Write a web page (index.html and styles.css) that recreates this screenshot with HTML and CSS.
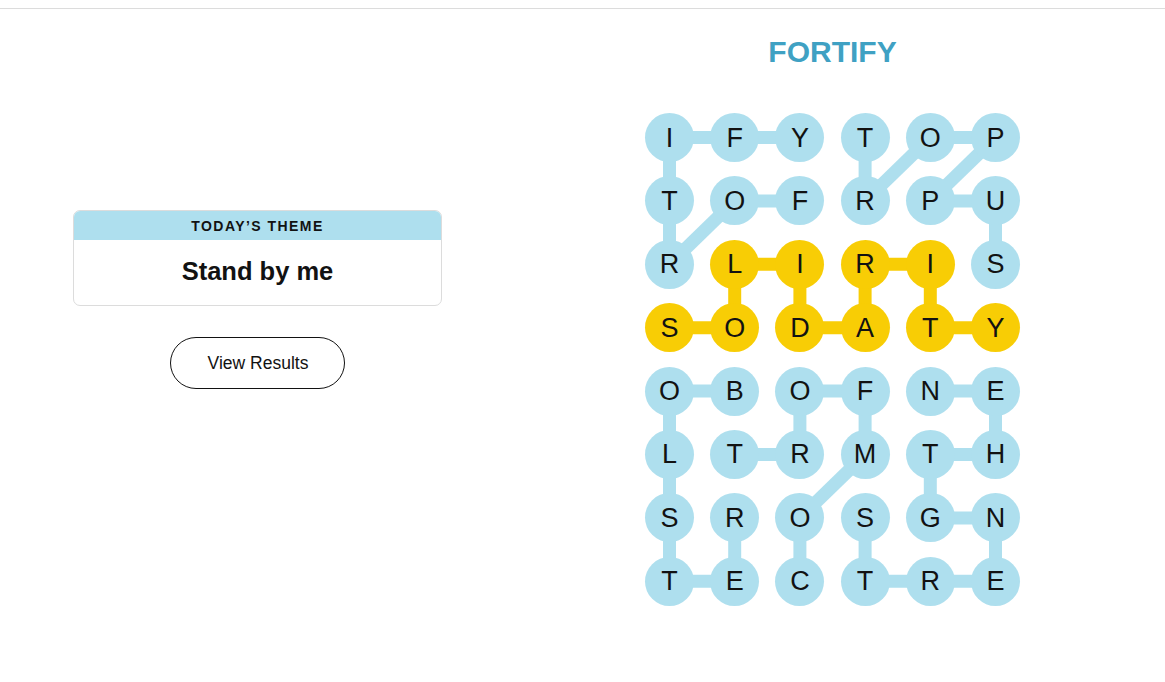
FILE: index.html
```html
<!DOCTYPE html>
<html lang="en">
<head>
<meta charset="utf-8">
<title>Strands</title>
<link rel="stylesheet" href="styles.css">
</head>
<body>
<div class="topbar"></div>
<main class="page">
  <section class="left">
    <div class="theme-card">
      <div class="theme-head">TODAY’S THEME</div>
      <div class="theme-body">Stand by me</div>
    </div>
    <button class="results-btn">View Results</button>
  </section>
  <section class="right">
    <h1 class="found-word">FORTIFY</h1>
    <div class="board">
      <svg class="links" width="375" height="493" viewBox="0 0 375 493" aria-hidden="true">
        <g stroke="#aedfee" stroke-width="13" stroke-linecap="butt">
          <!-- FORTIFY -->
          <line x1="24.5" y1="24.5" x2="89.7" y2="24.5"/>
          <line x1="89.7" y1="24.5" x2="154.9" y2="24.5"/>
          <line x1="24.5" y1="24.5" x2="24.5" y2="87.9"/>
          <line x1="24.5" y1="87.9" x2="24.5" y2="151.3"/>
          <line x1="24.5" y1="151.3" x2="89.7" y2="87.9"/>
          <line x1="89.7" y1="87.9" x2="154.9" y2="87.9"/>
          <!-- SUPPORT -->
          <line x1="220.1" y1="24.5" x2="220.1" y2="87.9"/>
          <line x1="220.1" y1="87.9" x2="285.3" y2="24.5"/>
          <line x1="285.3" y1="24.5" x2="350.5" y2="24.5"/>
          <line x1="350.5" y1="24.5" x2="285.3" y2="87.9"/>
          <line x1="285.3" y1="87.9" x2="350.5" y2="87.9"/>
          <line x1="350.5" y1="87.9" x2="350.5" y2="151.3"/>
          <!-- BOLSTER -->
          <line x1="24.5" y1="278.1" x2="89.7" y2="278.1"/>
          <line x1="24.5" y1="278.1" x2="24.5" y2="341.5"/>
          <line x1="24.5" y1="341.5" x2="24.5" y2="404.9"/>
          <line x1="24.5" y1="404.9" x2="24.5" y2="468.3"/>
          <line x1="24.5" y1="468.3" x2="89.7" y2="468.3"/>
          <line x1="89.7" y1="468.3" x2="89.7" y2="404.9"/>
          <!-- COMFORT -->
          <line x1="154.9" y1="278.1" x2="220.1" y2="278.1"/>
          <line x1="154.9" y1="278.1" x2="154.9" y2="341.5"/>
          <line x1="89.7" y1="341.5" x2="154.9" y2="341.5"/>
          <line x1="220.1" y1="278.1" x2="220.1" y2="341.5"/>
          <line x1="220.1" y1="341.5" x2="154.9" y2="404.9"/>
          <line x1="154.9" y1="404.9" x2="154.9" y2="468.3"/>
          <!-- STRENGTHEN -->
          <line x1="285.3" y1="278.1" x2="350.5" y2="278.1"/>
          <line x1="350.5" y1="278.1" x2="350.5" y2="341.5"/>
          <line x1="350.5" y1="341.5" x2="285.3" y2="341.5"/>
          <line x1="285.3" y1="341.5" x2="285.3" y2="404.9"/>
          <line x1="285.3" y1="404.9" x2="350.5" y2="404.9"/>
          <line x1="350.5" y1="404.9" x2="350.5" y2="468.3"/>
          <line x1="350.5" y1="468.3" x2="285.3" y2="468.3"/>
          <line x1="285.3" y1="468.3" x2="220.1" y2="468.3"/>
          <line x1="220.1" y1="468.3" x2="220.1" y2="404.9"/>
        </g>
        <g stroke="#f8cd05" stroke-width="13">
          <!-- SOLIDARITY -->
          <line x1="24.5" y1="214.7" x2="89.7" y2="214.7"/>
          <line x1="89.7" y1="214.7" x2="89.7" y2="151.3"/>
          <line x1="89.7" y1="151.3" x2="154.9" y2="151.3"/>
          <line x1="154.9" y1="151.3" x2="154.9" y2="214.7"/>
          <line x1="154.9" y1="214.7" x2="220.1" y2="214.7"/>
          <line x1="220.1" y1="214.7" x2="220.1" y2="151.3"/>
          <line x1="220.1" y1="151.3" x2="285.3" y2="151.3"/>
          <line x1="285.3" y1="151.3" x2="285.3" y2="214.7"/>
          <line x1="285.3" y1="214.7" x2="350.5" y2="214.7"/>
        </g>
      </svg>
      <div class="cell">I</div><div class="cell">F</div><div class="cell">Y</div><div class="cell">T</div><div class="cell">O</div><div class="cell">P</div>
      <div class="cell">T</div><div class="cell">O</div><div class="cell">F</div><div class="cell">R</div><div class="cell">P</div><div class="cell">U</div>
      <div class="cell">R</div><div class="cell gold">L</div><div class="cell gold">I</div><div class="cell gold">R</div><div class="cell gold">I</div><div class="cell">S</div>
      <div class="cell gold">S</div><div class="cell gold">O</div><div class="cell gold">D</div><div class="cell gold">A</div><div class="cell gold">T</div><div class="cell gold">Y</div>
      <div class="cell">O</div><div class="cell">B</div><div class="cell">O</div><div class="cell">F</div><div class="cell">N</div><div class="cell">E</div>
      <div class="cell">L</div><div class="cell">T</div><div class="cell">R</div><div class="cell">M</div><div class="cell">T</div><div class="cell">H</div>
      <div class="cell">S</div><div class="cell">R</div><div class="cell">O</div><div class="cell">S</div><div class="cell">G</div><div class="cell">N</div>
      <div class="cell">T</div><div class="cell">E</div><div class="cell">C</div><div class="cell">T</div><div class="cell">R</div><div class="cell">E</div>
    </div>
  </section>
</main>
</body>
</html>
```

FILE: styles.css
```css
* { box-sizing: border-box; }

html, body {
  margin: 0;
  padding: 0;
  background: #ffffff;
  color: #121212;
  font-family: "Liberation Sans", Arial, sans-serif;
}

.topbar {
  height: 9px;
  border-bottom: 1px solid #dcdcdc;
}

.page {
  display: flex;
  align-items: flex-start;
  padding-left: 73px;
}

.left {
  width: 369px;
  margin-top: 201px;
  display: flex;
  flex-direction: column;
  align-items: center;
}

.theme-card {
  width: 369px;
  border: 1px solid #dcdcdc;
  border-radius: 7px;
  overflow: hidden;
}

.theme-head {
  height: 29px;
  background: #aedfee;
  display: flex;
  align-items: center;
  justify-content: center;
  font-size: 14px;
  font-weight: 700;
  letter-spacing: 1.45px;
  padding-top: 0;
}

.theme-body {
  height: 65px;
  display: flex;
  align-items: center;
  justify-content: center;
  font-size: 25.5px;
  font-weight: 700;
  padding-bottom: 2px;
}

.results-btn {
  margin-top: 31px;
  width: 175px;
  height: 52px;
  border: 1px solid #121212;
  border-radius: 26px;
  background: #fff;
  color: #121212;
  font-family: "Liberation Sans", Arial, sans-serif;
  font-size: 17.5px;
  padding: 0 0 0 1px;
}

.right {
  margin-left: 203px;
  width: 375px;
  display: flex;
  flex-direction: column;
  align-items: center;
}

.found-word {
  margin: 25px 0 0;
  height: 36px;
  line-height: 36px;
  font-size: 30px;
  font-weight: 700;
  color: #3fa1c3;
}

.board {
  position: relative;
  margin-top: 43px;
  display: grid;
  grid-template-columns: repeat(6, 49px);
  grid-auto-rows: 49px;
  column-gap: 16.2px;
  row-gap: 14.4px;
}

.links {
  position: absolute;
  left: 0;
  top: 0;
  z-index: 0;
}

.cell {
  position: relative;
  z-index: 1;
  width: 49px;
  height: 49px;
  border-radius: 50%;
  background: #aedfee;
  display: flex;
  align-items: center;
  justify-content: center;
  font-size: 27px;
  color: #121212;
  padding-top: 1px;
}

.cell.gold {
  background: #f8cd05;
}
```
